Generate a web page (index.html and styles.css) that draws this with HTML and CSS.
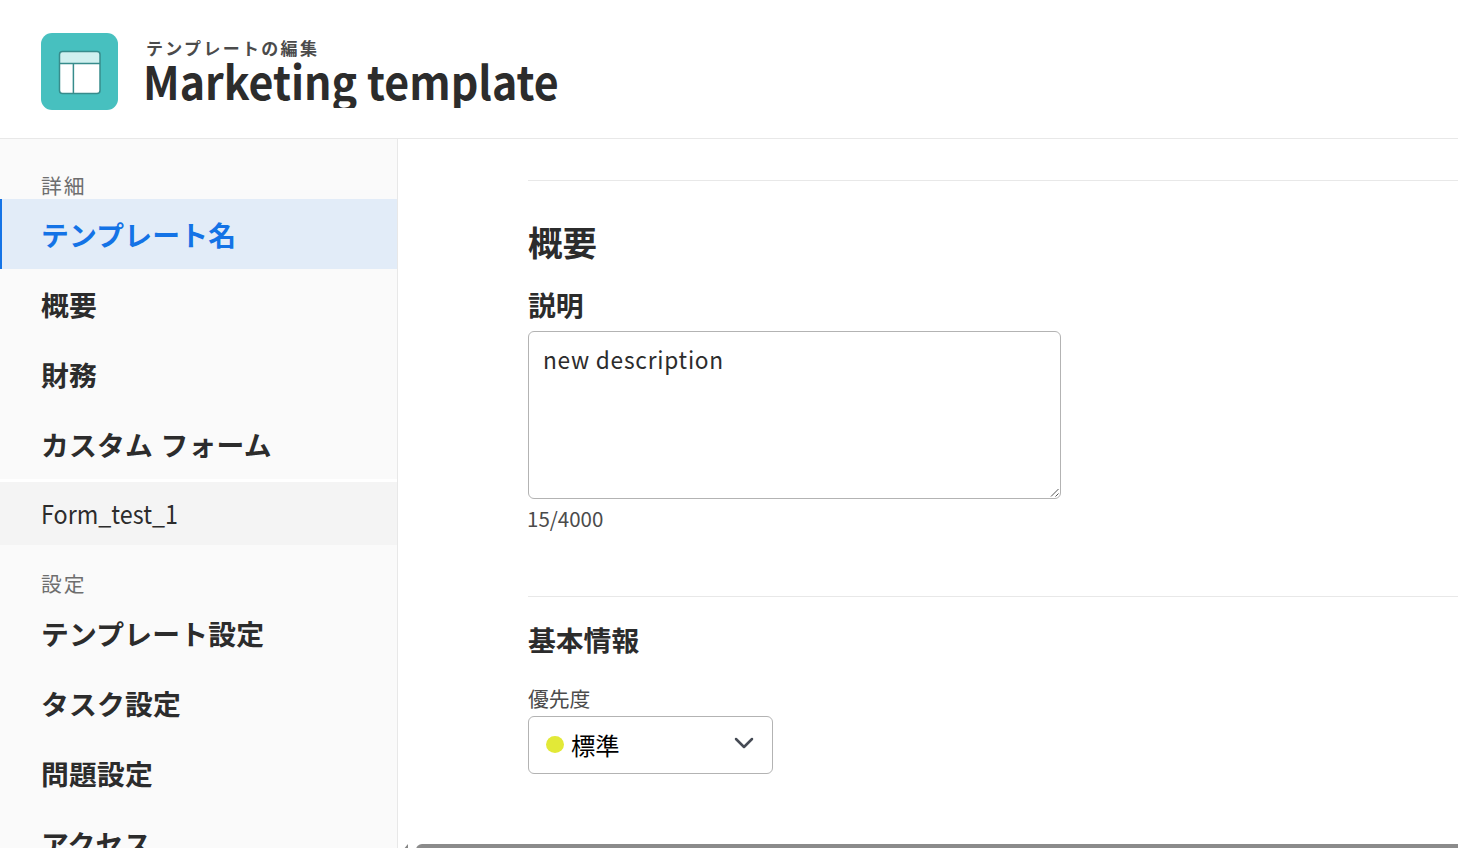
FILE: index.html
```html
<!DOCTYPE html>
<html lang="ja">
<head>
<meta charset="utf-8">
<title>Marketing template</title>
<link rel="stylesheet" href="styles.css">
</head>
<body>
<header class="header">
  <div class="badge">
    <svg width="77" height="77" viewBox="0 0 77 77">
      <rect x="18.5" y="18.5" width="40.5" height="42" rx="3" fill="#fff"/>
      <path d="M18.5 30.500V21.500a3 3 0 0 1 3-3h34.500a3 3 0 0 1 3 3v9z" fill="#d0f0ef"/>
      <path d="M18.500 30.500h40.500M32.400 30.500v29.500" stroke="#378c8c" stroke-width="1.500" fill="none"/>
      <rect x="18.500" y="18.500" width="40.500" height="42" rx="3" fill="none" stroke="#378c8c" stroke-width="1.500"/>
    </svg>
  </div>
  <div class="heading">
    <div class="eyebrow">テンプレートの編集</div>
    <h1 class="title">Marketing template</h1>
  </div>
</header>
<div class="body">
  <nav class="sidebar">
    <div class="group">詳細</div>
    <a class="item active">テンプレート名</a>
    <a class="item">概要</a>
    <a class="item">財務</a>
    <a class="item">カスタム フォーム</a>
    <a class="subitem"><span class="subitem-name">Form_test_1</span></a>
    <div class="group second">設定</div>
    <a class="item">テンプレート設定</a>
    <a class="item">タスク設定</a>
    <a class="item">問題設定</a>
    <a class="item">アクセス</a>
  </nav>
  <main class="main">
    <section class="section overview">
      <h2 class="section-title">概要</h2>
      <h3 class="field-title">説明</h3>
      <div class="textarea">
        <span class="value">new description</span>
        <svg class="grip" width="10" height="10" viewBox="0 0 10 10"><path d="M1 8.500L8.500 1M5.500 8.500L8.500 5.500" stroke="#555" fill="none"/></svg>
      </div>
      <div class="counter">15/4000</div>
    </section>
    <section class="section basic">
      <h3 class="basic-title">基本情報</h3>
      <div class="label">優先度</div>
      <div class="select">
        <span class="dot"></span>
        <span class="choice">標準</span>
        <svg class="chevron" width="20" height="14" viewBox="0 0 20 14"><path d="M2 3L10 11L18 3" stroke="#464b55" stroke-width="2.500" fill="none" stroke-linecap="round" stroke-linejoin="round"/></svg>
      </div>
    </section>
    <div class="scrollbar">
      <svg class="arrow" width="6" height="6" viewBox="0 0 6 6"><path d="M5 0v6H0z" fill="#858585"/></svg>
      <div class="thumb"></div>
    </div>
  </main>
</div>
</body>
</html>
```

FILE: styles.css
```css
* { box-sizing: border-box; }
body {
  margin: 0;
  width: 1458px;
  height: 848px;
  overflow: hidden;
  display: flex;
  flex-direction: column;
  background: #fff;
  color: #2c2c2c;
  font-family: "Noto Sans CJK JP", "Noto Sans", sans-serif;
}
h1, h2, h3 { margin: 0; }
.header {
  height: 139px;
  flex: none;
  display: flex;
  gap: 27px;
  padding: 33px 41px 0;
  border-bottom: 1px solid #e8e8e8;
}
.badge {
  width: 77px;
  height: 77px;
  border-radius: 11px;
  background: #47c0bf;
}
.badge svg { display: block; }
.eyebrow {
  height: 24px;
  padding: 3px 0 0 1px;
  line-height: 24px;
  font-size: 17px;
  font-weight: 700;
  letter-spacing: 2.3px;
  color: #4b4b4b;
}
.title {
  height: 51px;
  overflow: hidden;
  line-height: 45px;
  font-size: 46.500px;
  font-weight: 700;
  text-indent: -2px;
  white-space: nowrap;
  transform: scaleX(.924);
  transform-origin: left;
}
.body { display: flex; flex: 1; min-height: 0; }
.sidebar {
  width: 398px;
  flex: none;
  overflow: hidden;
  background: #fafafa;
  border-right: 1px solid #e8e8e8;
}
.group {
  height: 60px;
  padding: 32px 0 0 41px;
  line-height: 28px;
  font-size: 20.800px;
  letter-spacing: 2px;
  color: #6e6e6e;
}
.group.second { height: 53px; padding-top: 24px; }
.item {
  display: block;
  height: 70px;
  padding-left: 41px;
  line-height: 70px;
  font-size: 27.800px;
  font-weight: 700;
  letter-spacing: .2px;
  word-spacing: 1px;
}
.item.active {
  padding-left: 39px;
  border-left: 2px solid #1473e6;
  background: #e2ecf8;
  color: #1473e6;
}
.subitem {
  display: block;
  height: 66px;
  padding-left: 41px;
  border-top: 3px solid #fff;
  background: #f4f4f4;
  line-height: 62px;
  font-size: 25.500px;
}
.subitem-name {
  display: inline-block;
  transform: scaleX(.915);
  transform-origin: left;
}
.main {
  flex: 1;
  min-width: 0;
  display: flex;
  flex-direction: column;
  padding-top: 41px;
}
.section { margin-left: 130px; border-top: 1px solid #e8e8e8; }
.overview { height: 416px; padding-top: 38px; }
.section-title { height: 44px; line-height: 44px; font-size: 34.500px; font-weight: 700; }
.field-title { height: 68px; padding-top: 21px; line-height: 40px; font-size: 27.800px; font-weight: 700; }
.textarea {
  display: flex;
  justify-content: space-between;
  align-items: flex-end;
  width: 533px;
  height: 168px;
  padding-left: 14px;
  border: 1px solid #b3b3b3;
  border-radius: 6px;
}
.value {
  align-self: flex-start;
  padding-top: 9px;
  line-height: 36px;
  font-size: 24px;
  letter-spacing: .8px;
  transform: scaleX(.945);
  transform-origin: left;
}
.counter { height: 38px; line-height: 38px; font-size: 20.500px; color: #4b4b4b; text-indent: -1px; }
.basic { flex: 1; padding-top: 22px; }
.basic-title { height: 40px; line-height: 40px; font-size: 27.800px; font-weight: 700; }
.label { height: 57px; padding-top: 24px; line-height: 30px; font-size: 20.800px; color: #4b4b4b; }
.select {
  display: flex;
  align-items: center;
  width: 245px;
  height: 58px;
  padding: 0 18px 0 17px;
  border: 1px solid #b3b3b3;
  border-radius: 6px;
}
.dot { width: 18px; height: 17px; margin-bottom: 1px; border-radius: 50%; background: #e2e937; }
.choice { margin: 0 auto 0 7px; line-height: 40px; font-size: 24.300px; color: #000; }
.chevron { margin-bottom: 4px; }
.scrollbar { display: flex; flex: none; height: 4px; padding-left: 5px; gap: 7px; overflow: hidden; }
.arrow { flex: none; }
.thumb { flex: 1; height: 12px; border-radius: 6px 0 0 6px; background: #8b8b8b; }
```
